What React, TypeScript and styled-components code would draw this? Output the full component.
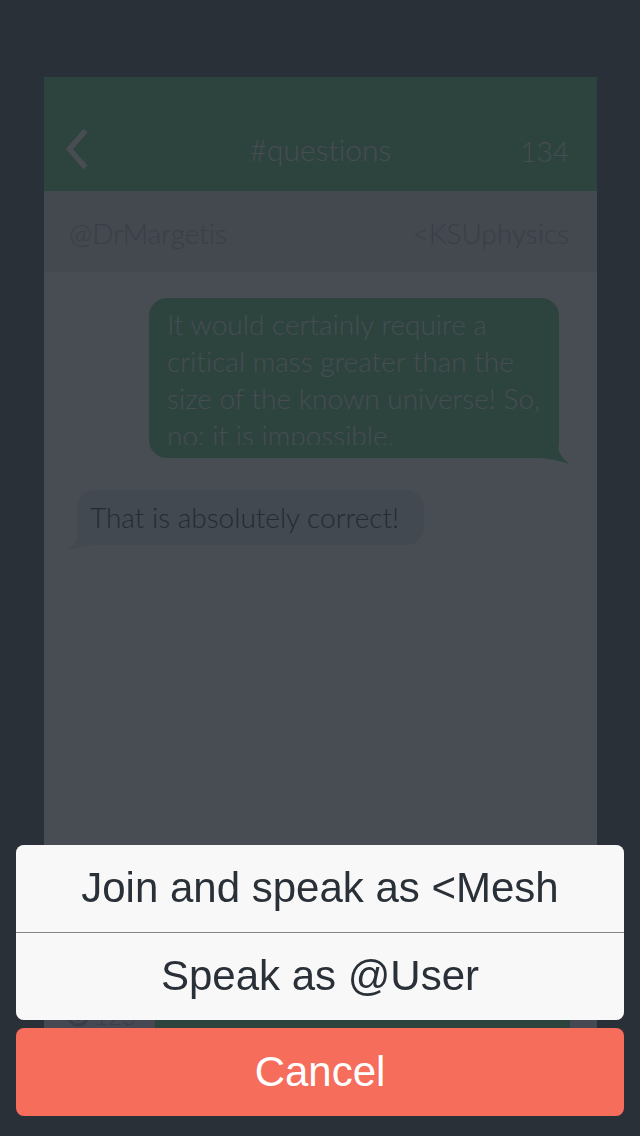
import React from 'react';
import styled, { createGlobalStyle } from 'styled-components';

const GlobalStyle = createGlobalStyle`
  *, *::before, *::after { box-sizing: border-box; }
  body { margin: 0; background: #2a3038; }
  button { border: 0; margin: 0; padding: 0; background: none; font: inherit; color: inherit; cursor: pointer; }
`;

const Page = styled.div`
  display: flex;
  min-height: 100vh;
  padding: 77px 43px 77px 44px;
  font-family: Lato, "Liberation Sans", sans-serif;
  font-weight: 300;
  font-size: 28px;
  font-variant-ligatures: none;
  color: #484c53;
`;

const Chat = styled.main`
  flex: 1;
  min-width: 0;
  display: flex;
  flex-direction: column;
  background: #484c53;
`;

const Header = styled.header`
  display: grid;
  grid-template-columns: 1fr auto 1fr;
  align-items: center;
  height: 114px;
  padding: 30px 22px 0;
  background: #2d443e;
`;

const BackButton = styled.button`
  justify-self: start;
  display: flex;
`;

const Title = styled.h1`
  margin: 0;
  font-size: 30px;
  font-weight: 300;
`;

const Count = styled.span`
  justify-self: end;
  padding: 4px 6px 0 0;
`;

const People = styled.div`
  display: flex;
  justify-content: space-between;
  align-items: center;
  height: 81px;
  padding: 2px 28px 0 25px;
  background: #44484f;
  color: #3b3e49;
`;

const PersonLink = styled.a`
  color: inherit;
  text-decoration: none;
`;

const Messages = styled.section`
  flex: 1;
  display: flex;
  flex-direction: column;
  gap: 32px;
  padding: 26px 38px 26px 33px;
`;

const Bubble = styled.div<{ $own?: boolean }>`
  position: relative;
  align-self: ${p => (p.$own ? 'flex-end' : 'flex-start')};
  width: ${p => (p.$own ? '410px' : '347px')};
  padding: ${p => (p.$own ? '8px 18px 13px' : '9px 13px')};
  border-radius: 18px;
  background: ${p => (p.$own ? '#2d443e' : '#424950')};
  color: ${p => (p.$own ? '#484c53' : '#262a34')};
  line-height: 37px;
`;

const BubbleText = styled.p<{ $clipped?: boolean }>`
  margin: 0;
  overflow: hidden;
  max-height: ${p => (p.$clipped ? '139px' : 'none')};
`;

const Tail = styled.svg<{ $own?: boolean }>`
  position: absolute;
  bottom: -6px;
  ${p => (p.$own ? 'right: -10px;' : 'left: -10px;')}
`;

const Composer = styled.footer`
  display: flex;
  align-items: center;
  height: 88px;
  padding: 12px 27px 12px 22px;
  background: #464952;
  color: #3b3e49;
`;

const Remaining = styled.div`
  display: flex;
  align-items: center;
  gap: 4px;
  width: 89px;
  font-size: 24px;
`;

const Field = styled.input`
  flex: 1;
  min-width: 0;
  height: 64px;
  border: 0;
  background: #2d443e;
`;

const Sheet = styled.div`
  position: fixed;
  left: 16px;
  right: 16px;
  bottom: 20px;
  display: flex;
  flex-direction: column;
  gap: 8px;
  font-family: "Liberation Sans", Arial, sans-serif;
  font-size: 42px;
  font-weight: 400;
`;

const Choices = styled.div`
  display: flex;
  flex-direction: column;
  gap: 1px;
  border-radius: 8px;
  overflow: hidden;
  background: #838486;
`;

const Choice = styled.button`
  height: 87px;
  padding-bottom: 2px;
  background: #f8f8f8;
  color: #2a3038;
`;

const Cancel = styled.button`
  height: 88px;
  border-radius: 8px;
  background: #f66d5c;
  color: #ffffff;
`;

export default function App() {
  return (
    <>
      <GlobalStyle />
      <Page>
        <Chat>
          <Header>
            <BackButton aria-label="Back">
              <svg width="22" height="42" viewBox="0 0 22 42" fill="none" stroke="#484c53" strokeWidth="5.5">
                <path d="M19.5 2.5 3.5 21 19.5 39.5" />
              </svg>
            </BackButton>
            <Title>#questions</Title>
            <Count>134</Count>
          </Header>
          <People>
            <PersonLink href="#drmargetis">@DrMargetis</PersonLink>
            <PersonLink href="#ksuphysics">&lt;KSUphysics</PersonLink>
          </People>
          <Messages>
            <Bubble $own>
              <BubbleText $clipped>
                It would certainly require a critical mass greater than the size of the known universe! So, no: it is impossible.
              </BubbleText>
              <Tail $own width="34" height="30" viewBox="0 0 34 30" fill="#2d443e">
                <path d="M24 0V10Q21 19 34 30Q20 25 6 24L4 8Z" />
              </Tail>
            </Bubble>
            <Bubble>
              <BubbleText>That is absolutely correct!</BubbleText>
              <Tail width="34" height="30" viewBox="0 0 34 30" fill="#424950">
                <path d="M10 0V10Q13 19 0 30Q14 25 28 24L30 8Z" />
              </Tail>
            </Bubble>
          </Messages>
          <Composer>
            <Remaining>
              <svg width="24" height="24" viewBox="0 0 24 24" fill="none" stroke="#3b3e49" strokeWidth="3">
                <circle cx="12" cy="12" r="10" />
                <path d="M12 6v11M7 12l5 5 5-5" />
              </svg>
              123
            </Remaining>
            <Field aria-label="Message" />
          </Composer>
        </Chat>
      </Page>
      <Sheet role="dialog" aria-label="Choose how to speak">
        <Choices>
          <Choice>Join and speak as &lt;Mesh</Choice>
          <Choice>Speak as @User</Choice>
        </Choices>
        <Cancel>Cancel</Cancel>
      </Sheet>
    </>
  );
}
